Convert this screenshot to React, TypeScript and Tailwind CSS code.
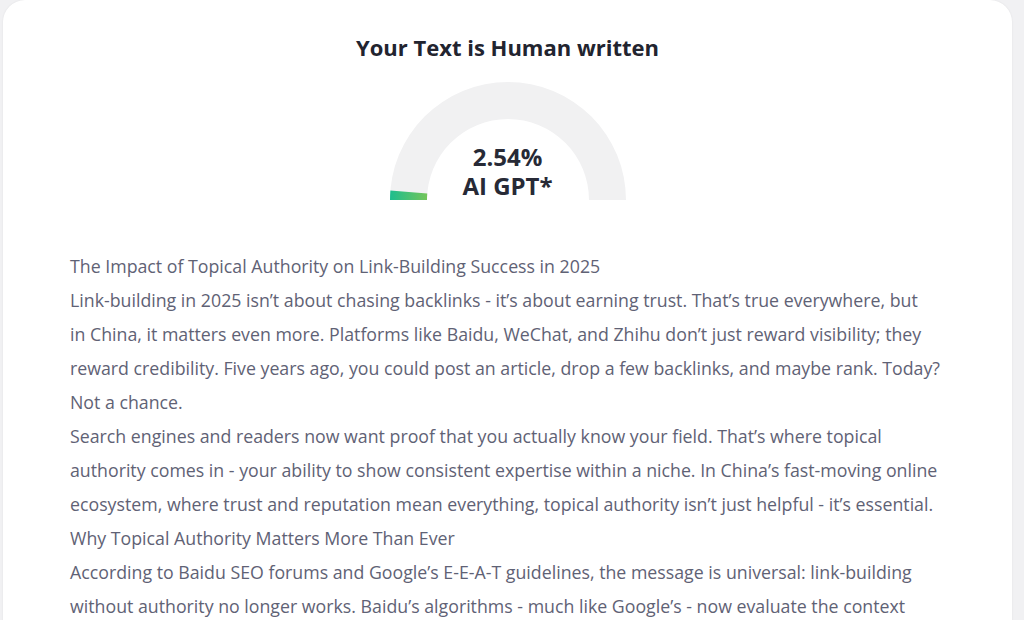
const paragraphs: string[][] = [
  ["The Impact of Topical Authority on Link-Building Success in 2025"],
  [
    "Link-building in 2025 isn’t about chasing backlinks - it’s about earning trust. That’s true everywhere, but",
    "in China, it matters even more. Platforms like Baidu, WeChat, and Zhihu don’t just reward visibility; they",
    "reward credibility. Five years ago, you could post an article, drop a few backlinks, and maybe rank. Today?",
    "Not a chance.",
  ],
  [
    "Search engines and readers now want proof that you actually know your field. That’s where topical",
    "authority comes in - your ability to show consistent expertise within a niche. In China’s fast-moving online",
    "ecosystem, where trust and reputation mean everything, topical authority isn’t just helpful - it’s essential.",
  ],
  ["Why Topical Authority Matters More Than Ever"],
  [
    "According to Baidu SEO forums and Google’s E-E-A-T guidelines, the message is universal: link-building",
    "without authority no longer works. Baidu’s algorithms - much like Google’s - now evaluate the context",
    "and depth of your content, not just the number of links pointing to it.",
  ],
];

function Gauge({ percent }: { percent: number }) {
  const R = 118;
  const r = 81;
  const a = (percent / 100) * Math.PI;
  const ox = R - R * Math.cos(a);
  const oy = R - R * Math.sin(a);
  const ix = R - r * Math.cos(a);
  const iy = R - r * Math.sin(a);
  return (
    <div className="relative h-[118px] w-[236px]">
      <svg width="236" height="118" viewBox="0 0 236 118" className="block">
        <defs>
          <linearGradient id="g" x1="0" y1="0" x2="1" y2="0">
            <stop offset="0" stopColor="#1dbd8e" />
            <stop offset="1" stopColor="#74c55a" />
          </linearGradient>
        </defs>
        <path
          d={`M0 118 A${R} ${R} 0 0 1 236 118 L${236 - (R - r)} 118 A${r} ${r} 0 0 0 ${R - r} 118 Z`}
          fill="#f1f1f2"
        />
        <path
          d={`M0 118 A${R} ${R} 0 0 1 ${ox} ${oy} L${ix} ${iy} A${r} ${r} 0 0 0 ${R - r} 118 Z`}
          fill="url(#g)"
        />
      </svg>
      <div className="absolute inset-x-0 bottom-0 flex flex-col items-center text-[24px] font-bold leading-[29px] text-[#272a36]">
        <span>{percent}%</span>
        <span>AI GPT*</span>
      </div>
    </div>
  );
}

export default function App() {
  return (
    <div className="h-[620px] overflow-hidden bg-[#f1f1f3] pl-[3px] font-['Open_Sans',sans-serif]">
      <div className="min-h-[640px] w-[1009px] rounded-[22px] bg-white px-[67px] pt-[32px] shadow-[0_0_2px_rgba(0,0,0,0.08)]">
        <h1 className="text-center text-[22px] font-bold leading-[30px] text-[#22242f]">
          Your Text is Human written
        </h1>
        <div className="mt-[20px] flex justify-center">
          <Gauge percent={2.54} />
        </div>
        <div className="mt-[49px] text-[17.75px] leading-[34px] text-[#5f6275]">
          {paragraphs.map((lines, i) => (
            <p key={i}>
              {lines.map((l, j) => (
                <span key={j} className="block whitespace-nowrap">
                  {l}
                </span>
              ))}
            </p>
          ))}
        </div>
      </div>
    </div>
  );
}
